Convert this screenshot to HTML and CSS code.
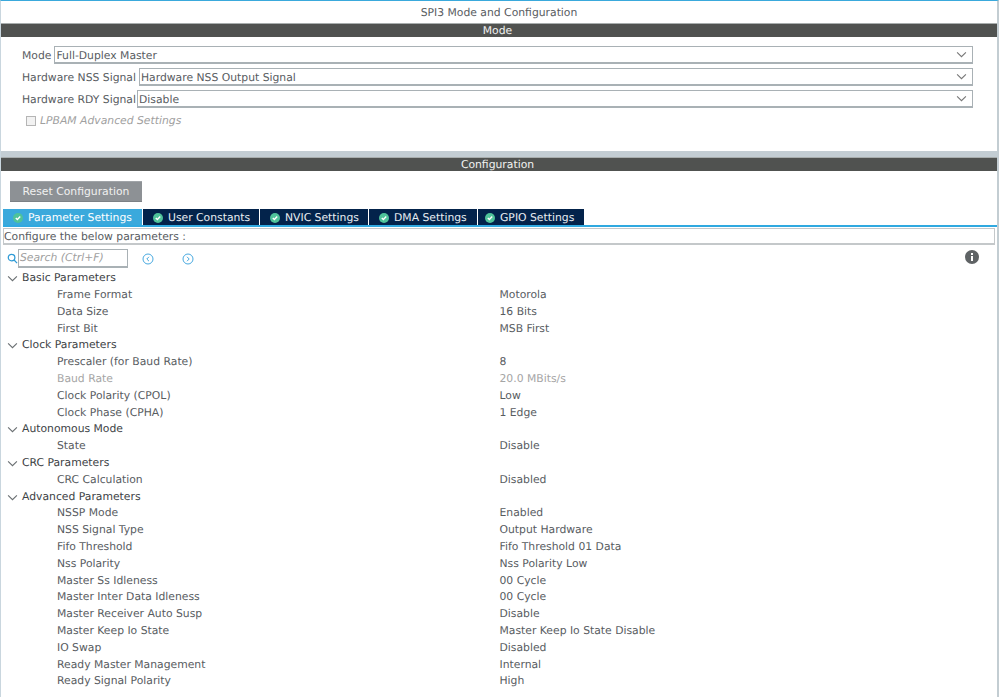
FILE: index.html
```html
<!DOCTYPE html>
<html lang="en">
<head>
<meta charset="utf-8">
<title>SPI3 Mode and Configuration</title>
<link rel="stylesheet" href="styles.css">
</head>
<body>
<div class="app">
  <header class="title">SPI3 Mode and Configuration</header>
  <div class="bar">Mode</div>
  <section class="mode">
    <div class="field"><label>Mode</label><div class="select">Full-Duplex Master<svg class="chev" viewBox="0 0 10 6"><path d="M1 1l4 4 4-4"/></svg></div></div>
    <div class="field"><label>Hardware NSS Signal</label><div class="select">Hardware NSS Output Signal<svg class="chev" viewBox="0 0 10 6"><path d="M1 1l4 4 4-4"/></svg></div></div>
    <div class="field tight"><label>Hardware RDY Signal</label><div class="select">Disable<svg class="chev" viewBox="0 0 10 6"><path d="M1 1l4 4 4-4"/></svg></div></div>
    <div class="check"><span class="box"></span><em>LPBAM Advanced Settings</em></div>
  </section>
  <div class="divider"></div>
  <div class="bar">Configuration</div>
  <section class="config">
    <button class="reset">Reset Configuration</button>
    <nav class="tabs">
      <div class="tab active"><svg class="ok" viewBox="0 0 10 10"><circle cx="5" cy="5" r="5"/><path d="M2.8 5l1.6 1.6 2.8-3"/></svg>Parameter Settings</div>
      <div class="tab w2"><svg class="ok" viewBox="0 0 10 10"><circle cx="5" cy="5" r="5"/><path d="M2.8 5l1.6 1.6 2.8-3"/></svg>User Constants</div>
      <div class="tab w3"><svg class="ok" viewBox="0 0 10 10"><circle cx="5" cy="5" r="5"/><path d="M2.8 5l1.6 1.6 2.8-3"/></svg>NVIC Settings</div>
      <div class="tab w3"><svg class="ok" viewBox="0 0 10 10"><circle cx="5" cy="5" r="5"/><path d="M2.8 5l1.6 1.6 2.8-3"/></svg>DMA Settings</div>
      <div class="tab w3"><svg class="ok" viewBox="0 0 10 10"><circle cx="5" cy="5" r="5"/><path d="M2.8 5l1.6 1.6 2.8-3"/></svg>GPIO Settings</div>
    </nav>
    <div class="describe">Configure the below parameters :</div>
    <div class="searchrow">
      <svg class="mag" viewBox="0 0 12 12"><circle cx="5" cy="5" r="3.6"/><path d="M7.7 7.7l3.3 3.3"/></svg>
      <div class="search">Search (Ctrl+F)</div>
      <svg class="nav first" viewBox="0 0 12 12"><circle cx="6" cy="6" r="5"/><path d="M7 3.8L4.8 6 7 8.2"/></svg>
      <svg class="nav second" viewBox="0 0 12 12"><circle cx="6" cy="6" r="5"/><path d="M5 3.8L7.2 6 5 8.2"/></svg>
      <svg class="info" viewBox="0 0 14 14"><circle cx="7" cy="7" r="7"/><rect x="6" y="6" width="2" height="5"/><rect x="6" y="3" width="2" height="2"/></svg>
    </div>
    <div class="tree">
      <div class="group"><svg class="tw" viewBox="0 0 10 6"><path d="M1 1l4 4 4-4"/></svg>Basic Parameters</div>
      <div class="row"><span>Frame Format</span><span>Motorola</span></div>
      <div class="row"><span>Data Size</span><span>16 Bits</span></div>
      <div class="row"><span>First Bit</span><span>MSB First</span></div>
      <div class="group"><svg class="tw" viewBox="0 0 10 6"><path d="M1 1l4 4 4-4"/></svg>Clock Parameters</div>
      <div class="row"><span>Prescaler (for Baud Rate)</span><span>8</span></div>
      <div class="row off"><span>Baud Rate</span><span>20.0 MBits/s</span></div>
      <div class="row"><span>Clock Polarity (CPOL)</span><span>Low</span></div>
      <div class="row"><span>Clock Phase (CPHA)</span><span>1 Edge</span></div>
      <div class="group"><svg class="tw" viewBox="0 0 10 6"><path d="M1 1l4 4 4-4"/></svg>Autonomous Mode</div>
      <div class="row"><span>State</span><span>Disable</span></div>
      <div class="group"><svg class="tw" viewBox="0 0 10 6"><path d="M1 1l4 4 4-4"/></svg>CRC Parameters</div>
      <div class="row"><span>CRC Calculation</span><span>Disabled</span></div>
      <div class="group"><svg class="tw" viewBox="0 0 10 6"><path d="M1 1l4 4 4-4"/></svg>Advanced Parameters</div>
      <div class="row"><span>NSSP Mode</span><span>Enabled</span></div>
      <div class="row"><span>NSS Signal Type</span><span>Output Hardware</span></div>
      <div class="row"><span>Fifo Threshold</span><span>Fifo Threshold 01 Data</span></div>
      <div class="row"><span>Nss Polarity</span><span>Nss Polarity Low</span></div>
      <div class="row"><span>Master Ss Idleness</span><span>00 Cycle</span></div>
      <div class="row"><span>Master Inter Data Idleness</span><span>00 Cycle</span></div>
      <div class="row"><span>Master Receiver Auto Susp</span><span>Disable</span></div>
      <div class="row"><span>Master Keep Io State</span><span>Master Keep Io State Disable</span></div>
      <div class="row"><span>IO Swap</span><span>Disabled</span></div>
      <div class="row"><span>Ready Master Management</span><span>Internal</span></div>
      <div class="row"><span>Ready Signal Polarity</span><span>High</span></div>
    </div>
  </section>
</div>
</body>
</html>
```
FILE: styles.css
```css
* { box-sizing: border-box; }
html, body { margin: 0; height: 100%; background: #fff; overflow: hidden; }
body { font: 10.8px/14px "DejaVu Sans", sans-serif; color: #585c5f; text-rendering: geometricPrecision; }
.app { width: 999px; height: 697px; border-top: 1px solid #3aa9dc; border-left: 1px solid #c9d6de; border-right: 2px solid #c3cdd2; overflow: hidden; }
.title { height: 22px; padding-top: 5px; text-align: center; }
.bar { height: 14px; line-height: 13px; padding-right: 3px; background: #505250; color: #f2f2f2; text-align: center; border-top: 1px solid #a8adad; }
.mode { height: 114px; padding: 9px 24px 0 21px; }
.field { display: flex; height: 18px; margin-bottom: 4px; align-items: stretch; }
.field label { line-height: 19px; margin-right: 3px; white-space: nowrap; }
.field.tight label { margin-right: 1px; }
.select { flex: 1; display: flex; justify-content: space-between; align-items: center; padding: 2px 5px 0 1px; border: 1px solid #a9b1b5; border-bottom-width: 2px; }
.chev { width: 11px; height: 7px; margin-top: -2px; fill: none; stroke: #777; stroke-width: 1; }
.check { display: flex; align-items: center; height: 18px; margin-left: 4px; color: #a0a0a0; }
.box { width: 10px; height: 10px; margin-right: 4px; background: #f2f2f2; border: 1px solid #b5b5b5; }
.divider { height: 6px; background: #c3cdd3; }
.config { padding-top: 10px; }
.reset { display: block; width: 132px; height: 21px; margin: 0 0 7px 9px; padding: 0; border: 0; border-top: 1px solid #a0a4a8; border-bottom: 1px solid #7d8185; background: #8d9195; color: #f0f0f0; font: inherit; }
.tabs { display: flex; height: 18px; margin-left: 2px; border-bottom: 2px solid #30a9e0; }
.tab { display: flex; align-items: center; width: 116px; height: 16px; padding: 1px 0 0 10px; background: #03234b; color: #e8edf2; border-right: 1px solid #fff; white-space: nowrap; }
.tab.active { width: 140px; background: #3aa9dc; color: #fff; }
.tab.w2 { width: 117px; }
.tab.w3 { width: 109px; }
.tab:last-child { width: 106px; padding-left: 7px; border-right: 0; }
.ok { width: 10px; height: 10px; margin-right: 5px; flex: none; }
.ok circle { fill: #4fc39a; }
.ok path { fill: none; stroke: #fff; stroke-width: 1.4; }
.describe { height: 17px; margin: 1px 2px 0; border: 1px solid #c4c8ca; border-bottom-width: 2px; line-height: 15px; }
.searchrow { display: flex; align-items: center; height: 19px; margin-top: 4px; padding-left: 6px; position: relative; }
.mag { width: 11px; height: 11px; fill: none; stroke: #2f9bd6; stroke-width: 1.4; flex: none; }
.search { width: 110px; height: 19px; border: 1px solid #a9b1b5; border-bottom-width: 2px; color: #a0a0a0; font-style: italic; padding-left: 1px; line-height: 16px; }
.nav { width: 12px; height: 12px; fill: none; stroke: #47a9e0; flex: none; }
.nav.first { margin-left: 14px; }
.nav.second { margin-left: 28px; }
.info { width: 14px; height: 14px; position: absolute; right: 18px; top: 1px; fill: #5f6365; }
.info rect { fill: #fff; }
.tree { margin-top: 2.2px; }
.group, .row { height: 16.8px; line-height: 16px; white-space: nowrap; }
.group { display: flex; align-items: flex-start; padding-left: 6px; color: #3d4245; }
.tw { width: 11px; height: 7px; margin: 5px 4px 0 0; fill: none; stroke: #6a6f72; }
.row { display: grid; grid-template-columns: 442.5px 1fr; padding-left: 56px; }
.row.off { color: #a5a5a5; }
```
